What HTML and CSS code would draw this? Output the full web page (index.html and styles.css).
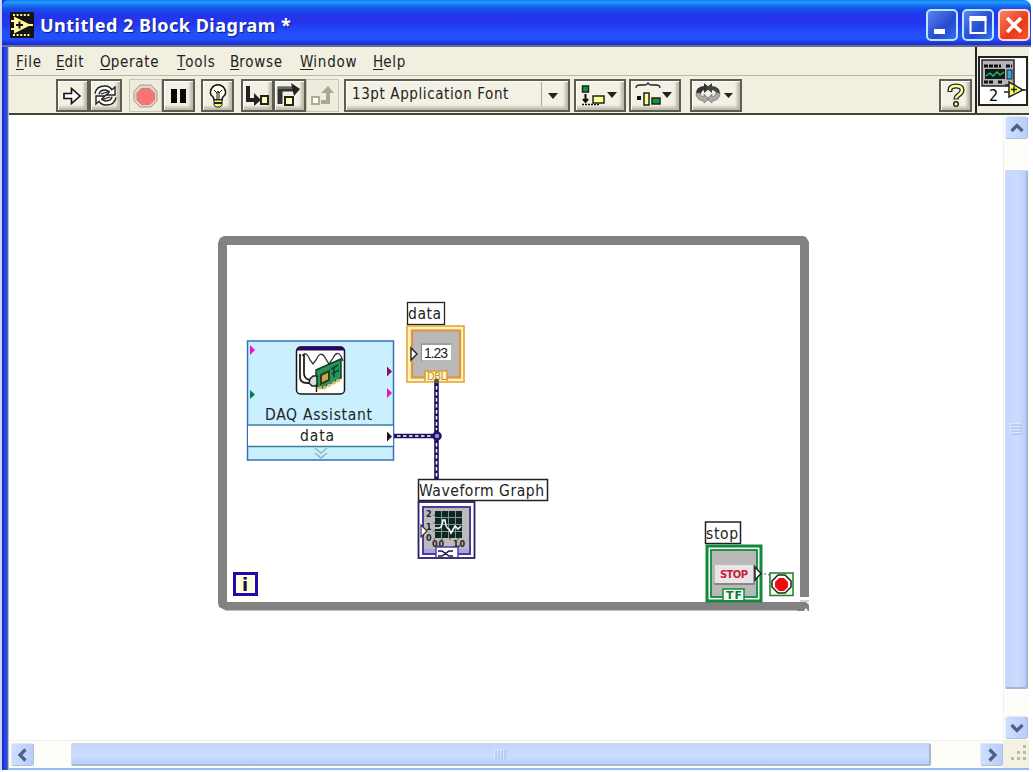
FILE: index.html
```html
<!DOCTYPE html>
<html lang="en">
<head>
<meta charset="utf-8">
<title>Untitled 2 Block Diagram *</title>
<link rel="stylesheet" href="styles.css">
</head>
<body>
<div class="window">
  <header class="titlebar">
    <svg class="app-icon" width="24" height="26" viewBox="0 0 24 26">
      <rect width="24" height="26" rx="1" fill="#15130c"/>
      <path d="M3 3h17M3 23h17" stroke="#f8f3b0" stroke-width="2" stroke-dasharray="2 1.6"/>
      <path d="M4 4.500L21 13 4 21.500z" fill="#fff59a"/><path d="M1 9h4M1 17h4M19 13h4" stroke="#fff59a" stroke-width="2"/>
      <path d="M6 13h7M9.500 9.500v7" stroke="#111" stroke-width="2"/>
    </svg>
    <h1 class="title">Untitled 2 Block Diagram *</h1>
    <div class="controls">
      <button class="control" aria-label="Minimize"><svg width="28" height="28"><rect x="6" y="18" width="11" height="5" fill="#fff"/></svg></button>
      <button class="control" aria-label="Maximize"><svg width="28" height="28"><path d="M6.500 7v15h15V7" fill="none" stroke="#fff" stroke-width="2"/><rect x="5.500" y="5" width="17" height="5" fill="#fff"/></svg></button>
      <button class="control close" aria-label="Close"><svg width="28" height="28"><path d="M7 7L21 21M21 7L7 21" stroke="#fff" stroke-width="3.600"/></svg></button>
    </div>
  </header>

  <div class="top">
    <div class="bars">
      <nav class="menu">
        <span><u>F</u>ile</span><span><u>E</u>dit</span><span><u>O</u>perate</span><span><u>T</u>ools</span><span><u>B</u>rowse</span><span><u>W</u>indow</span><span><u>H</u>elp</span>
      </nav>
      <div class="toolbar">
        <button class="tool"><svg width="29" height="29"><path d="M6 12.500h7.500V7.500L22 15l-8.500 7.500v-5H6z" fill="#fff" stroke="#111" stroke-width="1.600"/></svg></button>
        <button class="tool"><svg width="29" height="29" fill="none"><path d="M6 13q1-6 8-6 4 0 6 4M23 16q-1 6-8 6-4 0-6-4" stroke="#222" stroke-width="5.500"/><path d="M24 6v8h-9zM5 23v-8h9z" fill="#fff" stroke="#222" stroke-width="1.400"/><path d="M6 13q1-6 8-6 4 0 6 4M23 16q-1 6-8 6-4 0-6-4" stroke="#fff" stroke-width="2.600"/><path d="M10 13l9-3M10 19l9-3" stroke="#222" stroke-width="1.300"/></svg></button>
        <button class="tool flat gap"><svg width="31" height="29"><path d="M10 4h11l6 6v10l-6 6H10l-6-6V10z" fill="#dfd3c4" stroke="#aa9b91"/><path d="M11.500 7.500h8l5 4.500v7l-5 4.500h-8L7 19v-7z" fill="#fb7474" stroke="#cf8179"/></svg></button>
        <button class="tool"><svg width="29" height="29"><path d="M7 8h6v14H7zM16 8h6v14h-6z" fill="#080808"/></svg></button>
        <button class="tool bulb"><svg width="30" height="29"><path d="M11 19q0-3-3-5a7.500 7.500 0 1 1 14 0Q19 16 19 19z" fill="#fffdeb" stroke="#111" stroke-width="1.500"/><path d="M11 9l3 3 1-2 1 2 3-3M14 12v7M16 12v7" fill="none" stroke="#111"/><path d="M11 19h8v5l-2 2h-4l-2-2z" fill="#ffff77" stroke="#222"/><path d="M11 22h8" stroke="#222" stroke-width="2"/></svg></button>
        <button class="tool gap"><svg width="29" height="29"><path d="M5 5v14h9" fill="none" stroke="#222" stroke-width="4"/><path d="M11 12l7 7-7 6z" fill="#222"/><rect x="18" y="15" width="7" height="8" fill="#ffffbb" stroke="#222" stroke-width="2"/></svg></button>
        <button class="tool over"><svg width="29" height="29"><path d="M5 23V8h13" fill="none" stroke="#333" stroke-width="5"/><path d="M3 7h15" stroke="#999"/><path d="M16 2l9 6-6 7z" fill="#222"/><rect x="10" y="16" width="8" height="8" fill="#ffffbb" stroke="#222" stroke-width="2"/></svg></button>
        <button class="tool flat"><svg width="31" height="29"><rect x="5" y="16" width="7" height="7" fill="#ffffe5" stroke="#b0ab9b" stroke-width="2"/><path d="M14 21h7V9" fill="none" stroke="#aaa698" stroke-width="4"/><path d="M14 12l7-7 6 7z" fill="#aaa698"/></svg></button>
        <button class="tool font-picker"><span>13pt Application Font</span><svg width="26" height="27"><path d="M.5 0v24" stroke="#aca899"/><path d="M7 11h10l-5 6z" fill="#222"/></svg></button>
        <button class="tool drop first"><svg width="48" height="29"><rect x="6.500" y="5" width="6" height="6" fill="#109a37" stroke="#222" stroke-width="1.500"/><path d="M9.500 13v8M7 18l2.500 3 2.500-3" fill="none" stroke="#111" stroke-width="2"/><path d="M6 23.500h17" stroke="#111" stroke-width="1.500" stroke-dasharray="2 1"/><rect x="17" y="15" width="11" height="7" fill="#ffff8d" stroke="#222" stroke-width="1.500"/><path d="M31 11h10l-5 6z" fill="#222"/></svg></button>
        <button class="tool drop"><svg width="48" height="29"><path d="M5 7q0-3 4-3h5q2 0 3-2 1 2 3 2h5q4 0 4 3" fill="none" stroke="#222" stroke-width="1.300"/><rect x="6" y="15" width="4" height="4" fill="#111"/><rect x="13" y="12" width="5" height="12" fill="#ffff8d" stroke="#222" stroke-width="1.500"/><rect x="21" y="17" width="8" height="6" fill="#109a37" stroke="#222" stroke-width="1.500"/><path d="M31 11h10l-5 6z" fill="#222"/></svg></button>
        <button class="tool drop last"><svg width="48" height="29"><path d="M4 12q0-6 8-7V2l6 5-6 5V9q-3 1-3 4z" fill="#333"/><path d="M14 7l6-5v3q8 1 8 7h-4q0-2-4-3v3z" fill="#444"/><path d="M4 12q0 7 8 8v2l5-4-5-5v3q-3 0-4-4zM28 12q0 7-8 8v2l-5-4 5-5v3q3 0 4-4z" fill="#aaa" stroke="#777" stroke-width=".8"/><path d="M32 12h9l-4.500 5z" fill="#222"/></svg></button>
        <button class="tool help"><svg width="31" height="29" fill="none"><path d="M9 11V9q0-4 6-4t6 4q0 3-4 5.500-2 1.500-2 4" stroke="#222" stroke-width="5"/><path d="M9 10V9q0-4 6-4t6 4q0 3-4 5.500-2 1.500-2 3" stroke="#ffff9a" stroke-width="2.400"/><circle cx="15" cy="23" r="2.300" fill="#ffff9a" stroke="#222" stroke-width="1.500"/></svg></button>
      </div>
    </div>
    <div class="connector">
      <svg width="50" height="50" viewBox="978 56 50 50">
        <rect x="979" y="57" width="48" height="48" fill="#fff" stroke="#222" stroke-width="2"/>
        <rect x="982" y="60" width="32" height="26" fill="#b7b2ba" stroke="#222" stroke-width="1.500"/>
        <path d="M984 66h17M1006 66h6M984 82h10M998 82h4" stroke="#111" stroke-width="3" stroke-dasharray="4 1"/>
        <rect x="985" y="69" width="20" height="10" fill="#102019"/><path d="M986 76l4-3 3 3 4-4 3 3 4-3" fill="none" stroke="#21c56a" stroke-width="1.300"/>
        <rect x="1007" y="70" width="5" height="9" fill="#2ba8df" stroke="#222"/>
        <text class="vi-number" x="989" y="101">2</text>
        <path d="M1009 82v15l14-7z" fill="#ffff55" stroke="#222" stroke-width="1.500"/><path d="M1005 85h4M1004 92h5M1023 90h4" stroke="#222" stroke-width="1.500"/><path d="M1011 89.500h6M1014 86.500v6" stroke="#222" stroke-width="1.500"/>
      </svg>
    </div>
  </div>

  <main class="work">
    <svg class="diagram" width="994" height="625" viewBox="9 115 994 625">
      <!-- While loop border -->
      <path d="M224 236H803L806 237 809 242V597H800V245H227V602H797V610.500H226L219 607 218 603V243L220 238z" fill="#828282"/>
      <path d="M797 602h9l3 3v6h-12z" fill="#828282"/><path d="M797 598.500h12" stroke="#fff" stroke-width="3"/><path d="M800 601h9" stroke="#aaa"/><path d="M804 611l2-3 2 3" fill="#fff"/>

      <!-- Wires -->
      <g stroke="#20105f" stroke-width="4.600"><path d="M394 436H437M436.500 382V480"/></g>
      <g stroke="#fff" stroke-width="1.500" stroke-dasharray="3.500 2.500"><path d="M397 436H433M436.500 386V430M436.500 443V479"/></g>
      <circle cx="437" cy="436" r="3.500" fill="#8c8bc2" stroke="#20106b" stroke-width="2.500"/>

      <!-- DAQ Assistant -->
      <rect x="247.500" y="341" width="146" height="119" fill="#caf0ff" stroke="#3672b7" stroke-width="1.500"/>
      <rect x="248" y="425" width="145" height="21" fill="#fff"/><path d="M248 425h145M248 446.500h145" stroke="#417d9b" stroke-width="1.500"/>
      <path d="M250 345l5 5-5 5z" fill="#e218c6"/><path d="M250 390l5 4.500-5 4.500z" fill="#087b43"/><path d="M387 366.500l5 5-5 5z" fill="#861169"/><path d="M387 388l5 5-5 5z" fill="#e218c6"/><path d="M387 431.500l5 5-5 5z" fill="#21151c"/>
      <rect x="296.500" y="347" width="48" height="47" rx="4" fill="#fff" stroke="#171717" stroke-width="1.500"/><path d="M297 350q0-3 4-3h39q4 0 4 3z" fill="#310071" stroke="#20104a"/>
      <path d="M302 356q4-6 8 4l3 4 3-4q4-9 8-4l5 8 4-6q4-8 8-2l2 5" fill="none" stroke="#333" stroke-width="1.300"/>
      <path d="M300 354v23q0 6 7 6h6M304 354v19q0 6 6 7" fill="none" stroke="#222" stroke-width="1.800"/>
      <path d="M316 370l25-11v19l-19 10-6-2z" fill="#23975a" stroke="#173d25" stroke-width="1.500"/>
      <path d="M321 375l8-4v9l-8 4z" fill="#c8a64e" stroke="#33391c" stroke-width="2"/><path d="M331 369l7-4M332 374l7-4M334 367v10" stroke="#17382a" stroke-width="1.500"/><path d="M318 388h6l17-9" fill="none" stroke="#d5bd70" stroke-width="3" stroke-dasharray="4 1"/>
      <path d="M310 379l3-3h4v10h-5l-3-3zM316.500 384v8" fill="#ddd" stroke="#222" stroke-width="1.500"/>
      <text x="265" y="420" textLength="107">DAQ Assistant</text><text x="300" y="441" textLength="34" fill="#20104b">data</text>
      <path d="M315 448l6 5 6-5M315 453l6 5 6-5" fill="none" stroke="#91b5bc" stroke-width="1.500"/>

      <!-- Numeric indicator -->
      <rect x="407.500" y="302.500" width="37" height="22" fill="#fff" stroke="#222" stroke-width="1.300"/><text x="408" y="319" textLength="33">data</text>
      <rect x="407" y="326" width="57" height="56" fill="#fff5b9" stroke="#e5a53b" stroke-width="1.600"/><rect x="412" y="330.500" width="48" height="47" fill="#b9b9b9" stroke="#e39345" stroke-width="2.300"/>
      <rect x="422" y="345" width="29" height="15" fill="#fff"/><path d="M421.500 361v-17h30" fill="none" stroke="#888"/><text class="value" x="424" y="358" textLength="24">1.23</text>
      <path d="M411 348v12l6-6z" fill="#fff" stroke="#222" stroke-width="1.400"/><path d="M425 381v-10h22v10" fill="#fff5c7" stroke="#de9b30" stroke-width="1.500"/><text class="dbl" x="427" y="380" textLength="19">DBL</text><circle cx="436.500" cy="381" r="2.500" fill="#555"/>

      <!-- Waveform graph -->
      <rect x="418.500" y="502" width="56" height="56" fill="#fff" stroke="#292065" stroke-width="1.800"/><rect x="423" y="507" width="47" height="47" fill="#bcbbb9" stroke="#4c3aa0" stroke-width="2"/><path d="M424 549h45v4h-45z" fill="#aaa3df"/>
      <rect x="435" y="511" width="27" height="27" fill="#102622"/><path d="M441.500 511v27M448.500 511v27M455.500 511v27M435 517.500h27M435 524.500h27M435 531.500h27" stroke="#779792"/>
      <path d="M435 528h4q3 0 4-8h2q1 9 4 9l2 4 4-7 3 3 3-3" fill="none" stroke="#fff" stroke-width="1.600"/>
      <g class="axis"><text x="426" y="517">2</text><text x="426" y="530">1</text><text x="426" y="541">0</text><text x="432" y="547" textLength="12">0.0</text><text x="453" y="547" textLength="12">1.0</text></g>
      <path d="M434 514v25h28" fill="none" stroke="#555" stroke-dasharray="2 6"/><path d="M421 525v12l6-6z" fill="#fff" stroke="#333" stroke-width="1.200"/>
      <path d="M436 557v-10h22v10" fill="#fff" stroke="#4c3aa0" stroke-width="1.400"/><path d="M438 551h4l7 5h4M438 556h4l7-5h4" fill="none" stroke="#20104b" stroke-width="1.500"/>
      <rect x="418.500" y="479.500" width="129" height="21" fill="#fff" stroke="#222" stroke-width="1.500"/><text x="419" y="496" textLength="125">Waveform Graph</text>

      <!-- Loop iteration and stop terminals -->
      <rect x="234.500" y="573.500" width="22" height="21" fill="#fff" stroke="#210caa" stroke-width="3"/><rect x="237" y="576" width="17" height="16" fill="#ffffdc"/><text class="iteration" x="242" y="591">i</text>
      <path d="M760 574h7q3 0 3 6" fill="none" stroke="#087b43" stroke-dasharray="2 2"/>
      <rect x="705.500" y="522" width="35" height="21.500" fill="#fff" stroke="#222" stroke-width="1.500"/><text x="706" y="539" textLength="32">stop</text>
      <rect x="707" y="546" width="54" height="55" fill="#effff0" stroke="#16883d" stroke-width="3"/><rect x="711" y="550" width="46" height="47" fill="#b9b9b9" stroke="#16883d" stroke-width="1.800"/>
      <rect x="715" y="565" width="39" height="18" fill="#e9e5e6"/><path d="M714 584h40v-19" fill="none" stroke="#777" stroke-width="1.300"/><text class="stop" x="720" y="578" textLength="28">STOP</text>
      <path d="M755 567v13l6-6.500z" fill="#fff" stroke="#222" stroke-width="1.500"/><path d="M723 600v-11h21v11" fill="#f4fff4" stroke="#16883d" stroke-width="1.500"/><text class="tf" x="726" y="599" textLength="16">TF</text>
      <rect x="770" y="573" width="23" height="22.500" fill="#efffdf" stroke="#237a3b" stroke-width="1.500"/><path d="M778 575h7l6 6v6l-6 6h-7l-6-6v-6z" fill="#fff" stroke="#222" stroke-width="1.500"/><path d="M779 578h5l4 4v5l-4 4h-5l-4-4v-5z" fill="#f10910"/>
    </svg>
    <div class="vscroll">
      <button class="arrow"><svg width="20" height="20"><path d="M4.500 13L10 7.500l5.500 5.500" fill="none" stroke="#4d6185" stroke-width="3.200"/></svg></button>
      <div class="thumb vertical"><svg width="12" height="12"><path d="M0 1h11M0 4h11M0 7h11M0 10h11" stroke="#f0f7ff"/><path d="M1 2h11M1 5h11M1 8h11M1 11h11" stroke="#9eb6e6"/></svg></div>
      <button class="arrow"><svg width="20" height="20"><path d="M4.500 7L10 12.500 15.500 7" fill="none" stroke="#4d6185" stroke-width="3.200"/></svg></button>
    </div>
    <div class="hscroll">
      <button class="arrow"><svg width="20" height="20"><path d="M12.500 4.500L7 10l5.500 5.500" fill="none" stroke="#4d6185" stroke-width="3.200"/></svg></button>
      <div class="thumb horizontal"><svg width="13" height="10"><path d="M1 0v9M4 0v9M7 0v9M10 0v9" stroke="#f0f7ff"/><path d="M2 1v9M5 1v9M8 1v9M11 1v9" stroke="#9eb6e6"/></svg></div>
      <button class="arrow"><svg width="20" height="20"><path d="M7.500 4.500L13 10l-5.500 5.500" fill="none" stroke="#4d6185" stroke-width="3.200"/></svg></button>
    </div>
    <div class="grip"><svg width="26" height="27"><path d="M20 5h3v3h-3zM14 11h3v3h-3zM20 11h3v3h-3zM8 17h3v3H8zM14 17h3v3h-3zM20 17h3v3h-3z" fill="#bdb9a9"/></svg></div>
  </main>
</div>
</body>
</html>
```

FILE: styles.css
```css
* { box-sizing: border-box; }
body { margin: 0; width: 1033px; height: 772px; overflow: hidden; background: #fff; font-family: "DejaVu Sans Condensed", "DejaVu Sans", sans-serif; font-stretch: condensed; color: #222; }
button { margin: 0; padding: 0; font: inherit; color: inherit; border: 0; }
svg { display: block; flex: none; }
.window { width: 1031px; height: 770px; padding: 0 2px 2px 9px; margin-left: 0; background: linear-gradient(90deg, #cdd9f4 0 2px, #1526c9 2px, #2b45ed 5px, #244bd6 7px, #7a8390 8px, #fff 9px); }
.titlebar { display: flex; align-items: center; height: 47px; margin: 0 -2px 0 -7px; padding: 4px 1px 0 8px; border-radius: 7px 7px 0 0; border-bottom: 2px solid #66718d; background: linear-gradient(#0c7cf0 0, #269cff 2px, #1678f2 5px, #154fe8 9px, #2434e8 15px, #2437ee 24px, #224ffc 33px, #2350fb 39px, #1f24cc 45px); }
.title { flex: 1; margin: 0 0 0 6px; font: bold 18px "Noto Sans", "Open Sans", sans-serif; color: #fff; text-shadow: 1px 1px 1px #102087; letter-spacing: .5px; }
.controls { display: flex; gap: 4px; }
.control { width: 32px; height: 32px; padding: 0; display: grid; place-items: center; border: 2px solid #b7eaff; border-radius: 5px; background: linear-gradient(135deg, #5c82ef, #2449cf 60%, #3570ed); }
.close { background: linear-gradient(135deg, #fb8165, #e93a15 60%, #f25a28); border-color: #ffd9cf; }
.top { display: flex; height: 68px; border-bottom: 2px solid #3d4637; background: #f1efdf; }
.bars { width: 968px; border-right: 2px solid #222; }
.menu { height: 29px; display: grid; grid-template-columns: 40px 44px 77px 53px 70px 73px 60px; padding: 5px 0 0 7px; border-bottom: 1px solid #b9b6a6; font-size: 15px; line-height: 21px; letter-spacing: .75px; }
.menu u { text-underline-offset: 2px; letter-spacing: 0; }
.toolbar { height: 37px; display: flex; padding: 3px 3px 1px 47px; }
.tool { flex: none; width: 33px; height: 33px; display: grid; place-items: center; border: 2px solid #5d5d51; background: #f3f1e4; box-shadow: inset 1px 1px #fff, inset -3px -3px 3px #bdb9a9; }
.flat { border: 1px solid #c9c6b7; box-shadow: none; background: #efecde; }
.gap { margin-left: 7px; }
.bulb { margin-left: 6px; }
.over { margin-left: -1px; }
.font-picker { width: 226px; display: flex; align-items: center; justify-content: space-between; margin-left: 5px; padding: 0 1px 0 6px; font-size: 15px; }
.font-picker span { margin-top: -4px; letter-spacing: .6px; white-space: nowrap; }
.drop { width: 52px; margin-left: 3px; }
.first { margin-left: 4px; }
.last { margin-left: 9px; }
.help { margin-left: auto; }
.connector { padding: 9px 0 0 1px; }
.work { display: grid; grid-template: 625px 28px / 994px 26px; background: #fff; border-bottom: 2px solid #94bdf8; }
.diagram text { font-size: 15.500px; fill: #222; }
.diagram text, .vi-number { font-family: "DejaVu Sans Condensed", "DejaVu Sans", sans-serif; }
.vi-number { font-size: 16px; }
.diagram .value { font: 14px "Liberation Sans", sans-serif; }
.diagram .dbl { font: 10px "DejaVu Sans", sans-serif; fill: #c79220; }
.diagram .axis text { font: bold 8px "DejaVu Sans", sans-serif; }
.diagram .iteration { font: bold 18px "DejaVu Sans", sans-serif; fill: #20104b; }
.diagram .stop { font: bold 10px "DejaVu Sans", sans-serif; fill: #c51b39; }
.diagram .tf { font: bold 11px "DejaVu Sans", sans-serif; fill: #147338; }
.vscroll { display: flex; flex-direction: column; align-items: center; padding: 1px 1px 1px 1px; background: #fdfdf9; border-left: 1px solid #f3f1e8; }
.hscroll { display: flex; align-items: center; padding: 0 0 0 2px; background: #fdfdf9; border-top: 1px solid #f3f1e8; }
.arrow { width: 23px; height: 23px; flex: none; display: grid; place-items: center; border: 1px solid #e1eafb; border-right-color: #acbfdc; border-bottom-color: #acbfdc; border-radius: 3px; background: linear-gradient(90deg, #d0dfff, #b9cdfa); }
.thumb { display: grid; place-items: center; border: 1px solid #cad9f7; border-radius: 2px; }
.vertical { width: 23px; height: 520px; margin: 31px 0 27px; background: linear-gradient(90deg, #c5d4fb, #cbdcff 60%, #b9cdfb); border-right: 2px solid #a4b9cb; border-bottom: 2px solid #a4b9cb; }
.horizontal { width: 860px; height: 23px; margin: 0 49px 0 37px; background: linear-gradient(#c5d4fb, #cbdcff 60%, #b9cdfb); border-right: 2px solid #a4b9cb; border-bottom: 2px solid #a4b9cb; }
.grip { background: #f3f1e1; }
```
